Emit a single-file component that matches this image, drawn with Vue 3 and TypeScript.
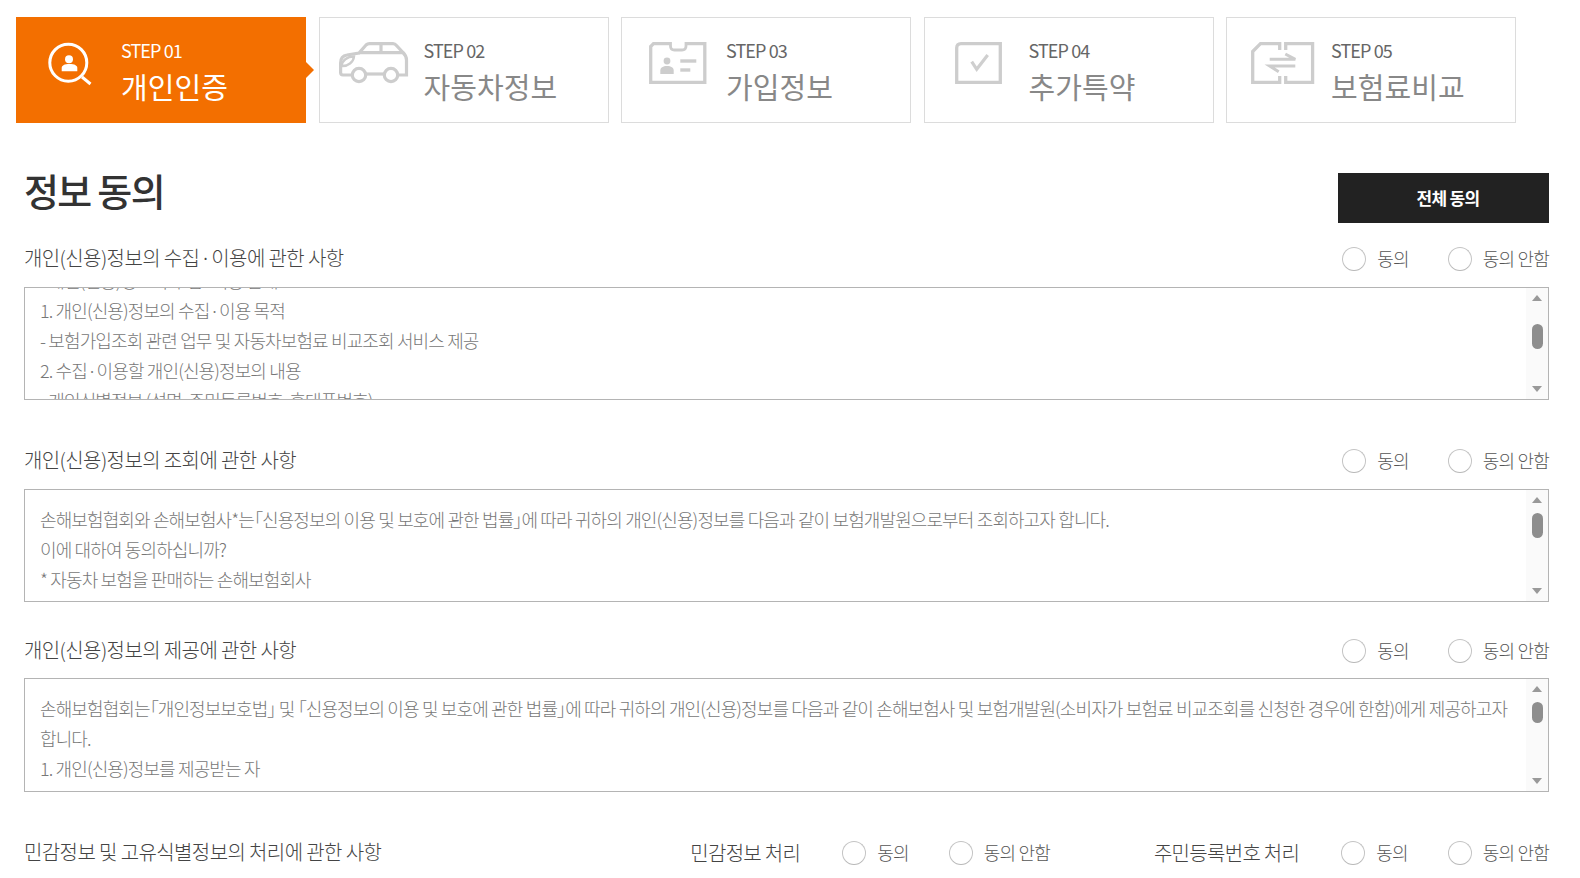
<script setup lang="ts">
import { onMounted, ref } from 'vue'

interface Step { no: string; title: string; icon: string }
const steps: Step[] = [
  { no: 'STEP 01', title: '개인인증', icon: 'auth' },
  { no: 'STEP 02', title: '자동차정보', icon: 'car' },
  { no: 'STEP 03', title: '가입정보', icon: 'card' },
  { no: 'STEP 04', title: '추가특약', icon: 'check' },
  { no: 'STEP 05', title: '보험료비교', icon: 'swap' },
]

const firstBox = ref<HTMLElement | null>(null)
onMounted(() => {
  if (firstBox.value) firstBox.value.scrollTop = 37
})

const sections = [
  {
    title: ['개인(신용)정보의 수집', '이용에 관한 사항'],
    cls: 's1',
    thumb: 't1',
    lines: [
      ['- 개인(신용)정보의 수집', '이용 안내'],
      ['1. 개인(신용)정보의 수집', '이용 목적'],
      ['- 보험가입조회 관련 업무 및 자동차보험료 비교조회 서비스 제공'],
      ['2. 수집', '이용할 개인(신용)정보의 내용'],
      ['- 개인식별정보 (성명, 주민등록번호, 휴대폰번호)'],
    ],
  },
  {
    title: ['개인(신용)정보의 조회에 관한 사항'],
    cls: 's2',
    thumb: 't2',
    lines: [
      ['손해보험협회와 손해보험사*는「신용정보의 이용 및 보호에 관한 법률」에 따라 귀하의 개인(신용)정보를 다음과 같이 보험개발원으로부터 조회하고자 합니다.'],
      ['이에 대하여 동의하십니까?'],
      ['* 자동차 보험을 판매하는 손해보험회사'],
    ],
  },
  {
    title: ['개인(신용)정보의 제공에 관한 사항'],
    cls: 's3',
    thumb: 't3',
    lines: [
      ['손해보험협회는「개인정보보호법」 및 「신용정보의 이용 및 보호에 관한 법률」에 따라 귀하의 개인(신용)정보를 다음과 같이 손해보험사 및 보험개발원(소비자가 보험료 비교조회를 신청한 경우에 한함)에게 제공하고자 합니다.'],
      ['1. 개인(신용)정보를 제공받는 자'],
    ],
  },
]
</script>

<template>
  <div class="page">
    <ul class="steps">
      <li v-for="(s, i) in steps" :key="s.no" class="step" :class="{ active: i === 0 }">
        <div class="icon-wrap" :class="'ic-' + s.icon">
          <svg v-if="s.icon === 'auth'" width="48" height="46" viewBox="0 0 48 46" fill="none">
            <circle cx="22.3" cy="22.7" r="18.5" stroke="#fff" stroke-width="3" />
            <path d="M36 37 L44.500 44" stroke="#fff" stroke-width="3" />
            <circle cx="23" cy="19.300" r="4" fill="#fff" />
            <path d="M15.700 31.300 V28 C15.700 25.500 18.500 24 23.500 24 S31.300 25.500 31.300 28 V31.300 Z" fill="#fff" />
          </svg>
          <svg v-else-if="s.icon === 'car'" width="70" height="42" viewBox="0 0 70 42" fill="none" stroke="#cdcdcd" stroke-width="3.2">
            <path d="M12 33 H4 Q1.600 33 1.600 30.500 V21 C1.600 16 4 13.500 8 13 L20 11 L27 3 Q28.500 1.600 30.500 1.600 H54 Q56 1.600 57.500 3.500 L64 10.500 C66.500 13 67.500 15 67.500 18 V33 H60" />
            <path d="M27 32 H45" />
            <circle cx="20" cy="33" r="6.700" />
            <circle cx="52" cy="33" r="6.700" />
            <path d="M20 10.700 H64 M42 1.600 V10.700" />
            <path d="M2.500 24 C3 18.500 8 14.500 15 14.500 C14.500 20 9 24.500 2.500 24 Z" stroke-width="2.400" />
          </svg>
          <svg v-else-if="s.icon === 'card'" width="58" height="42" viewBox="0 0 58 42" fill="none" stroke="#cdcdcd">
            <path d="M21 1.700 H4.500 L1.700 4.500 V40.300 H55.800 V1.700 H37" stroke-width="3.300" />
            <path d="M21.500 0 V4 Q21.500 8 25.500 8 H33 Q37 8 37 4 V0" stroke-width="2.800" />
            <circle cx="18" cy="19" r="3.400" fill="#cdcdcd" stroke="none" />
            <path d="M11.300 32 V28.500 C11.300 25.500 14 24 18 24 S24.700 25.500 24.700 28.500 V32 Z" fill="#cdcdcd" stroke="none" />
            <rect x="31.300" y="17.300" width="16" height="3.400" fill="#cdcdcd" stroke="none" />
            <rect x="31.300" y="26.300" width="10" height="3.400" fill="#cdcdcd" stroke="none" />
          </svg>
          <svg v-else-if="s.icon === 'check'" width="47" height="42" viewBox="0 0 47 42" fill="none">
            <path d="M6 1.700 H45.300 V40.300 H1.700 V6 Q1.700 1.700 6 1.700 Z" stroke="#cdcdcd" stroke-width="3.300" />
            <path d="M16.700 19.700 L21.700 27.300 L32.700 13" stroke="#cfcfcf" stroke-width="3.200" />
          </svg>
          <svg v-else width="64" height="42" viewBox="0 0 64 42" fill="none" stroke="#cdcdcd" stroke-width="3.300">
            <path d="M28.700 0 V8 M28.700 1.700 H9.500 L1.700 9.500 V40.300 H28.700 M28.700 34 V42" />
            <path d="M34.700 8 V1.700 H61.600 V40.300 H34.700 V34" />
            <path d="M18.700 17.300 H44.300 L34.300 12 M44.300 24 H18.700 L27.700 29.700" stroke-width="3" />
          </svg>
        </div>
        <div class="step-text">
          <span class="no">{{ s.no }}</span>
          <strong class="name">{{ s.title }}</strong>
        </div>
      </li>
    </ul>

    <div class="head">
      <h2>정보 동의</h2>
      <button class="all" type="button">전체 동의</button>
    </div>

    <section v-for="sec in sections" :key="sec.cls" class="sec" :class="sec.cls">
      <div class="row">
        <h3><template v-for="(part, pi) in sec.title" :key="pi"><span v-if="pi > 0" class="dot"> · </span>{{ part }}</template></h3>
        <div class="opts">
          <label class="opt"><i class="radio"></i>동의</label>
          <label class="opt"><i class="radio"></i>동의 안함</label>
        </div>
      </div>
      <div class="box">
        <div :ref="sec.cls === 's1' ? (el) => { firstBox = el as HTMLElement } : undefined" class="scroll">
          <p v-for="(l, li) in sec.lines" :key="li"><template v-for="(part, pi) in l" :key="pi"><span v-if="pi > 0" class="dot"> · </span>{{ part }}</template></p>
        </div>
        <div class="bar">
          <i class="up"></i>
          <i class="thumb" :class="sec.thumb"></i>
          <i class="down"></i>
        </div>
      </div>
    </section>

    <div class="row last">
      <h3>민감정보 및 고유식별정보의 처리에 관한 사항</h3>
      <div class="opts wide">
        <span class="opt-title t-a">민감정보 처리</span>
        <label class="opt"><i class="radio"></i>동의</label>
        <label class="opt"><i class="radio"></i>동의 안함</label>
        <span class="opt-title t-b">주민등록번호 처리</span>
        <label class="opt"><i class="radio"></i>동의</label>
        <label class="opt"><i class="radio"></i>동의 안함</label>
      </div>
    </div>
  </div>
</template>

<style>
html, body { margin: 0; background: #fff; overflow: hidden; }
</style>

<style scoped>
.page {
  width: 1580px;
  height: 878px;
  overflow: hidden;
  box-sizing: border-box;
  padding: 17px 31px 0 24px;
  font-family: "Noto Sans CJK KR", "Noto Sans", sans-serif;
  font-feature-settings: "palt";
  color: #555;
}
.steps {
  list-style: none;
  margin: 0 0 0 -8px;
  padding: 0;
  display: flex;
  gap: 12.5px;
}
.step {
  position: relative;
  box-sizing: border-box;
  width: 290px;
  height: 106px;
  border: 1px solid #dcdcdc;
  display: flex;
  align-items: flex-start;
  color: #888;
}
.step.active {
  background: #f36f00;
  border-color: #f36f00;
  color: #fff;
}
.step.active::after {
  content: "";
  position: absolute;
  left: 289px;
  top: 44px;
  width: 0;
  height: 0;
  border-left: 8px solid #f36f00;
  border-top: 8px solid transparent;
  border-bottom: 8px solid transparent;
}
.icon-wrap { display: flex; margin-top: 24px; flex: none; }
.ic-auth { width: 48px; margin-top: 22px; margin-left: 29px; margin-right: 27px; }
.ic-car { width: 70px; margin-left: 19px; margin-right: 15px; }
.ic-card { width: 58px; margin-left: 26.5px; margin-right: 19.5px; }
.ic-check { width: 47px; margin-left: 30.5px; margin-right: 26.5px; }
.ic-swap { width: 64px; margin-left: 23.7px; margin-right: 16.3px; }
.step-text { display: flex; flex-direction: column; }
.no {
  margin-top: 19px;
  font-size: 18px;
  line-height: 26px;
  letter-spacing: -0.9px;
  color: #666;
  white-space: nowrap;
}
.active .no { color: #fff; }
.name {
  margin-top: 3px;
  font-size: 29px;
  line-height: 40px;
  font-weight: 400;
  letter-spacing: 0.1px;
  white-space: nowrap;
}
.head {
  display: flex;
  justify-content: space-between;
  align-items: flex-start;
  margin-top: 50px;
  height: 64px;
}
h2 {
  margin: 0;
  font-size: 38px;
  line-height: 34px;
  font-weight: 500;
  letter-spacing: -1.7px;
  color: #333;
}
.all {
  width: 211px;
  height: 50px;
  border: 0;
  background: #222;
  color: #fff;
  font: 700 17px/50px "Noto Sans CJK KR", sans-serif;
  letter-spacing: -0.7px;
  padding: 0 0 0 9px;
}
.row {
  display: flex;
  justify-content: space-between;
  align-items: center;
  height: 42px;
}
h3 {
  margin: 0;
  font-size: 20px;
  line-height: 30px;
  font-weight: 300;
  letter-spacing: -0.6px;
  color: #444;
}
.dot { word-spacing: -0.15em; }
.opts { display: flex; align-items: center; }
.opt {
  display: flex;
  align-items: center;
  font-size: 18px;
  font-weight: 300;
  letter-spacing: -0.8px;
  color: #555;
  white-space: nowrap;
}
.opt + .opt { margin-left: 39px; }
.radio {
  box-sizing: border-box;
  width: 24px;
  height: 24px;
  border: 1px solid #c4c4c4;
  border-bottom-color: #b8b8b8;
  border-radius: 50%;
  margin-right: 11px;
  margin-top: 2px;
  background: #fff;
}
.box {
  position: relative;
  box-sizing: border-box;
  height: 113px;
  margin-top: 8px;
  border: 1px solid #b4b4b4;
}
.s3 .box { margin-top: 7px; height: 114px; }
.scroll {
  height: 111px;
  overflow: hidden;
  box-sizing: border-box;
  padding: 14px 28px 0 15px;
}
.s3 .scroll { height: 112px; }
.scroll p {
  margin: 0;
  font-size: 18px;
  font-weight: 300;
  line-height: 30px;
  letter-spacing: -0.9px;
  word-spacing: 0.2px;
  word-break: keep-all;
  color: #777;
}
.bar {
  position: absolute;
  right: 0;
  top: 0;
  bottom: 0;
  width: 22px;
  background: #fafafa;
}
.up, .down {
  position: absolute;
  left: 6px;
  width: 0;
  height: 0;
  border-left: 5px solid transparent;
  border-right: 5px solid transparent;
}
.up { top: 7px; border-bottom: 6px solid #999; }
.down { bottom: 7px; border-top: 6px solid #999; }
.thumb {
  position: absolute;
  left: 6px;
  width: 11px;
  height: 25px;
  border-radius: 6px;
  background: #8e8e8e;
}
.t1 { top: 36px; }
.t2 { top: 23px; }
.t3 { top: 23px; height: 21px; }
.s2 { margin-top: 39px; }
.s3 { margin-top: 27px; }
.last { margin-top: 39px; }
.wide .opt + .opt { margin-left: 40px; }
.opt-title {
  font-size: 20px;
  font-weight: 300;
  letter-spacing: -0.7px;
  color: #444;
  margin-right: 41px;
  white-space: nowrap;
}
.t-a { margin-right: 42px; }
.t-b { margin-left: 104px; margin-right: 42px; }
</style>
